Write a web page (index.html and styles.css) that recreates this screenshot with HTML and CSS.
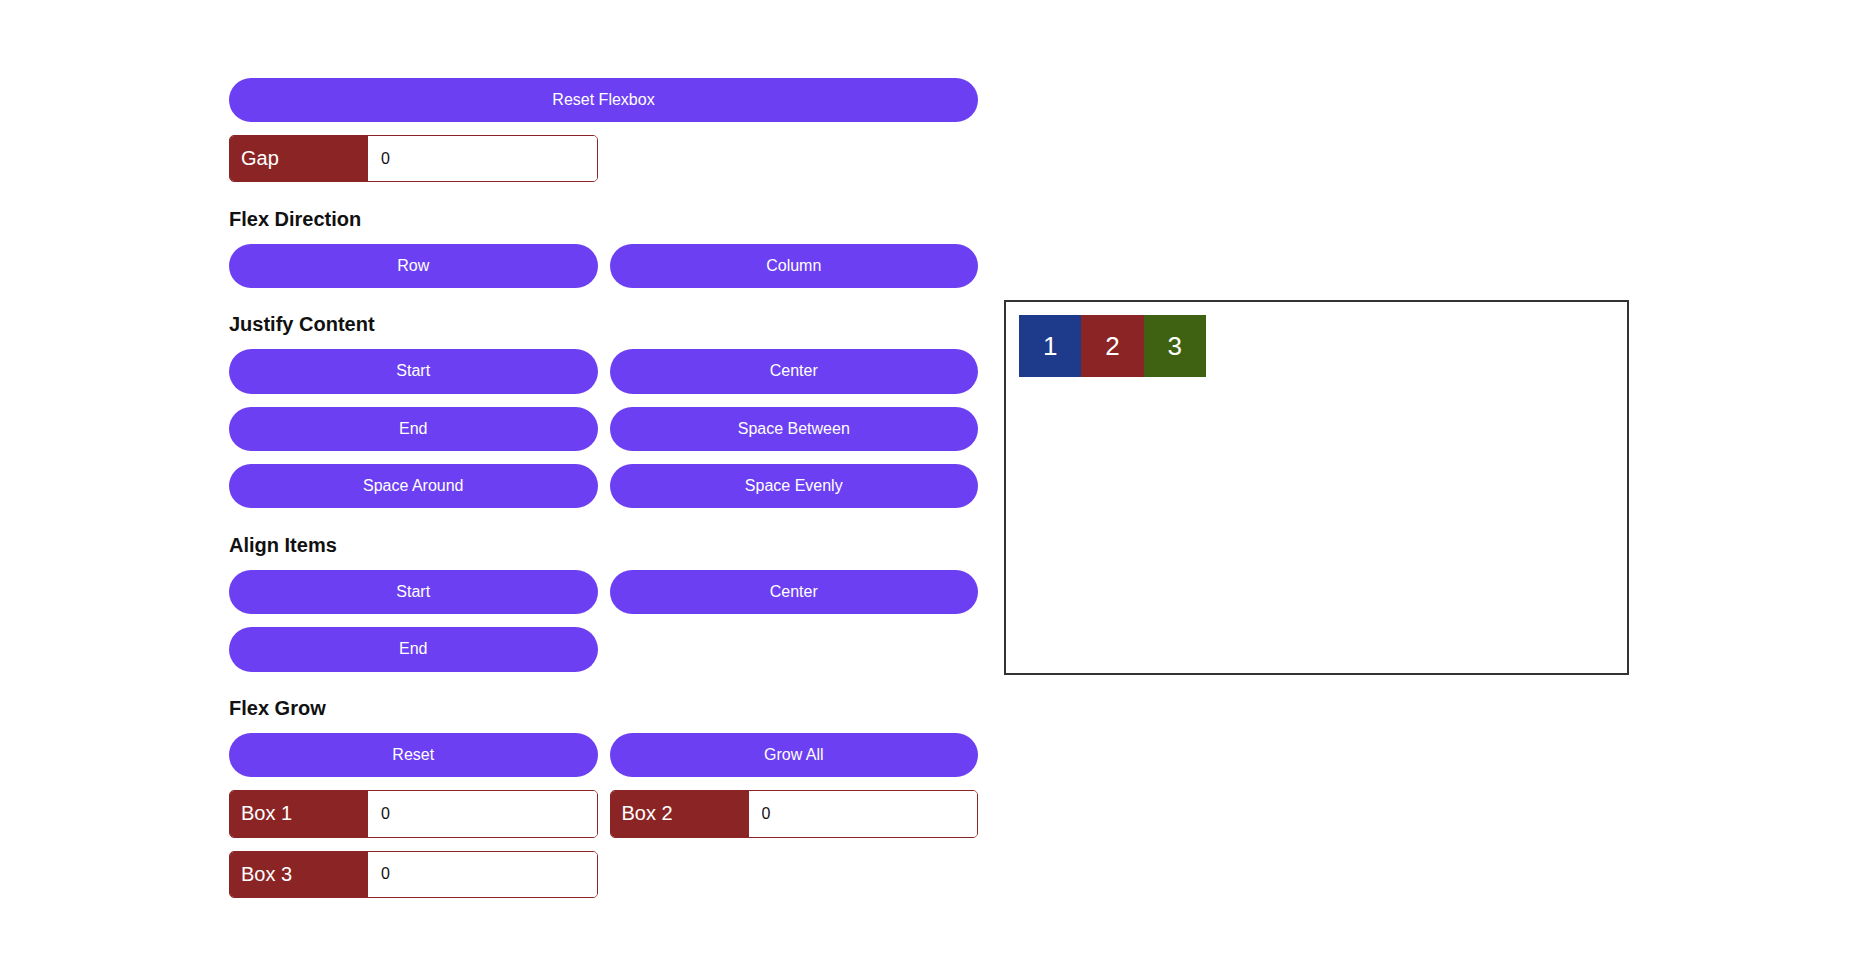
FILE: index.html
```html
<!DOCTYPE html>
<html lang="en">
<head>
<meta charset="utf-8">
<title>Flexbox Playground</title>
<link rel="stylesheet" href="styles.css">
</head>
<body>
<main class="page">
  <section class="controls">
    <button class="btn span-2">Reset Flexbox</button>
    <label class="field">
      <span class="field-label">Gap</span>
      <input class="field-input" type="text" value="0">
    </label>

    <h3 class="heading">Flex Direction</h3>
    <button class="btn">Row</button>
    <button class="btn">Column</button>

    <h3 class="heading">Justify Content</h3>
    <button class="btn">Start</button>
    <button class="btn">Center</button>
    <button class="btn">End</button>
    <button class="btn">Space Between</button>
    <button class="btn">Space Around</button>
    <button class="btn">Space Evenly</button>

    <h3 class="heading">Align Items</h3>
    <button class="btn">Start</button>
    <button class="btn">Center</button>
    <button class="btn">End</button>

    <h3 class="heading">Flex Grow</h3>
    <button class="btn">Reset</button>
    <button class="btn">Grow All</button>
    <label class="field">
      <span class="field-label">Box 1</span>
      <input class="field-input" type="text" value="0">
    </label>
    <label class="field">
      <span class="field-label">Box 2</span>
      <input class="field-input" type="text" value="0">
    </label>
    <label class="field">
      <span class="field-label">Box 3</span>
      <input class="field-input" type="text" value="0">
    </label>
  </section>

  <section class="canvas">
    <div class="box box-1">1</div>
    <div class="box box-2">2</div>
    <div class="box box-3">3</div>
  </section>
</main>
</body>
</html>
```

FILE: styles.css
```css
* {
  box-sizing: border-box;
}

html, body {
  margin: 0;
  background: #ffffff;
}

body {
  font-family: "Liberation Sans", Arial, sans-serif;
  color: #111111;
}

.page {
  display: grid;
  grid-template-columns: 749px 625px;
  column-gap: 26px;
  align-items: center;
  padding: 77.5px 0 0 229px;
}

.controls {
  display: grid;
  grid-template-columns: 1fr 1fr;
  column-gap: 12px;
  row-gap: 13px;
}

.span-2 {
  grid-column: 1 / -1;
}

.btn {
  height: 44.4px;
  border: none;
  border-radius: 23px;
  background: #6d3ff2;
  color: #ffffff;
  font-family: "Liberation Sans", Arial, sans-serif;
  font-size: 16px;
  padding: 0 16px;
  cursor: pointer;
}

.heading {
  grid-column: 1 / -1;
  margin: 12.3px 0 0 0;
  font-size: 20px;
  line-height: 23px;
  font-weight: 700;
  color: #111111;
}

.field {
  display: flex;
  height: 47.4px;
  border: 1px solid #8b2525;
  border-radius: 5px;
  overflow: hidden;
}

.field-label {
  flex: 0 0 139px;
  margin: -1px 0 -1px -1px;
  display: flex;
  align-items: center;
  padding-left: 12px;
  background: #8b2525;
  color: #ffffff;
  font-size: 20px;
  border-radius: 5px 0 0 5px;
}

.field-input {
  flex: 1;
  min-width: 0;
  border: none;
  outline: none;
  padding: 0 13px;
  font-family: "Liberation Sans", Arial, sans-serif;
  font-size: 16px;
  color: #111111;
  background: #ffffff;
}

.canvas {
  height: 375px;
  border: 2px solid #333333;
  padding: 13px;
  display: flex;
  align-items: flex-start;
}

.box {
  width: 62.3px;
  height: 62px;
  display: flex;
  align-items: center;
  justify-content: center;
  color: #ffffff;
  font-size: 26px;
}

.box-1 {
  background: #1e3a8a;
}

.box-2 {
  background: #8b2525;
}

.box-3 {
  background: #3f6212;
}
```
